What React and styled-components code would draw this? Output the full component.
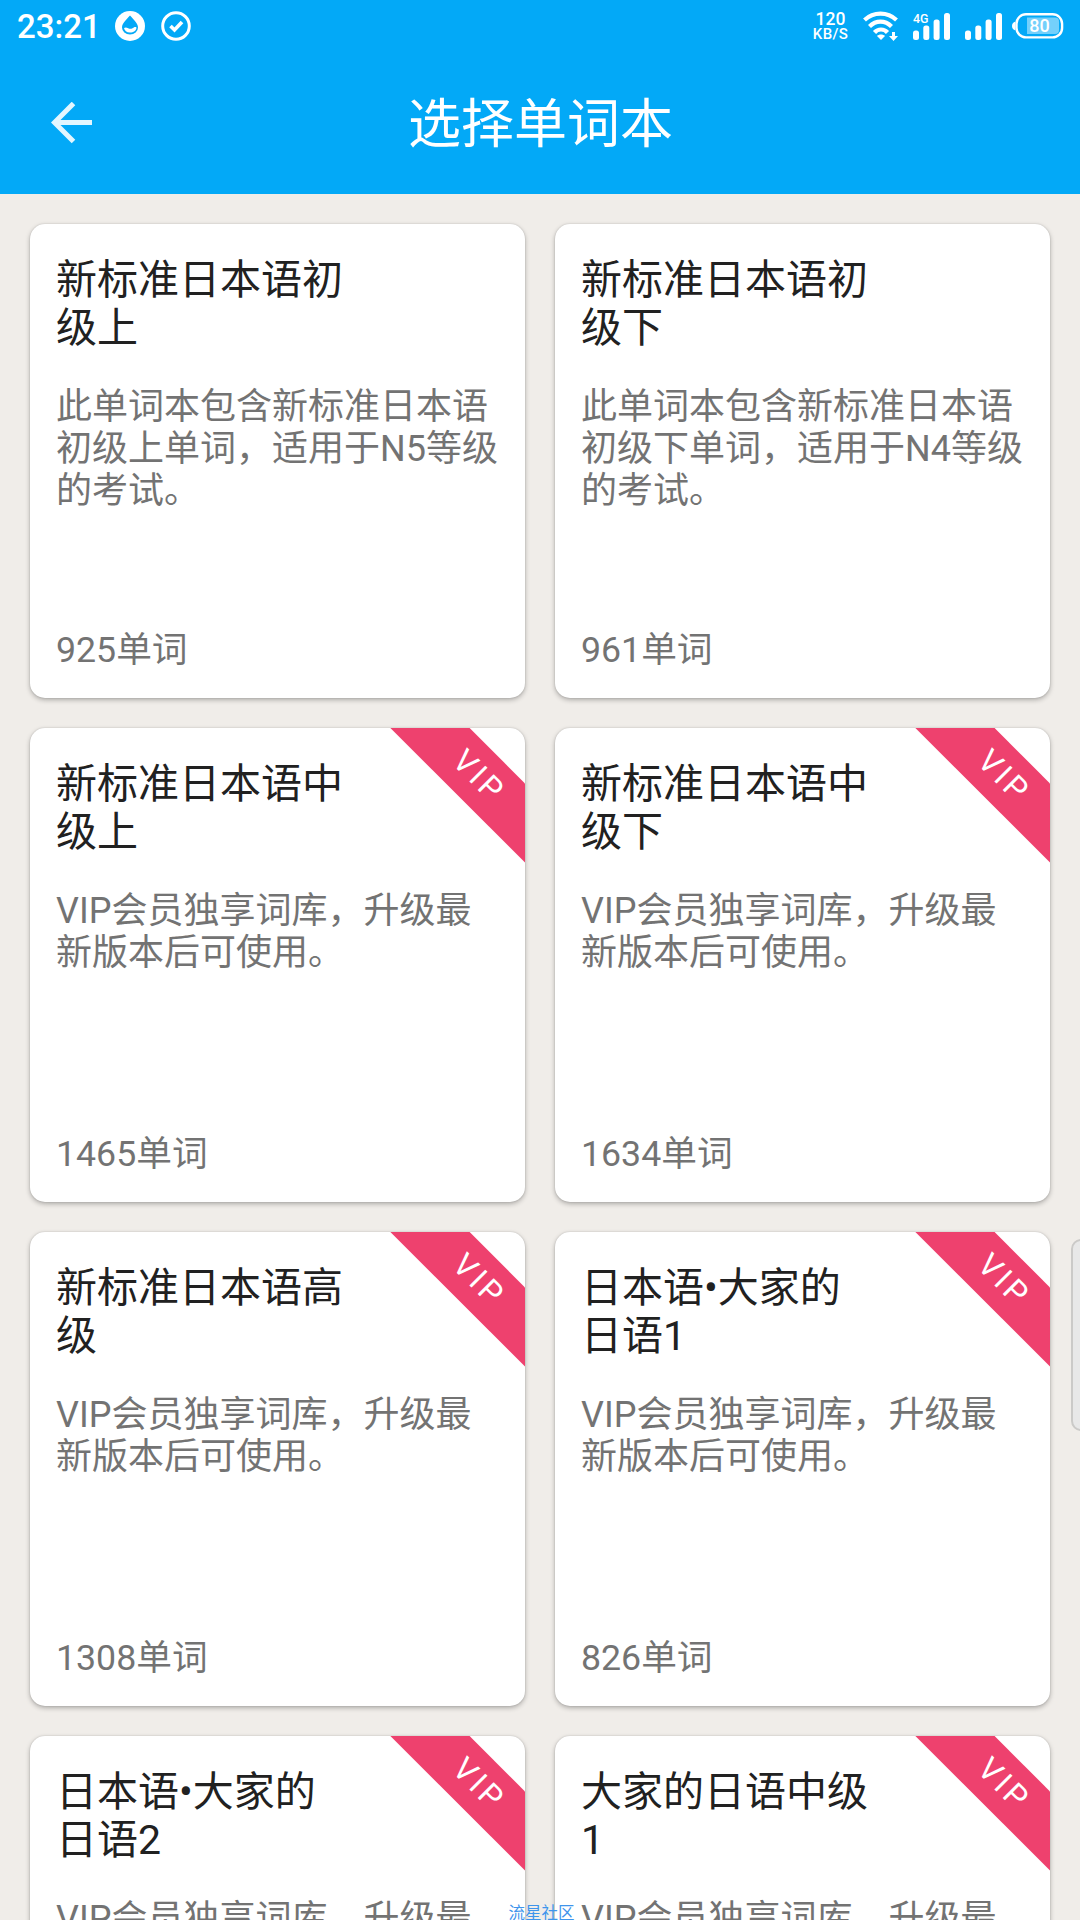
import React from 'react';
import styled, { createGlobalStyle } from 'styled-components';

const GlobalStyle = createGlobalStyle`
  * {
    box-sizing: border-box;
  }

  body {
    margin: 0;
    background: #f0ede9;
    font-family: Roboto, 'Noto Sans CJK SC', sans-serif;
  }
`;

const Screen = styled.div`
  position: relative;
  width: 1080px;
  height: 1920px;
  overflow: hidden;
  background: #f0ede9;
`;

const Header = styled.header`
  height: 194px;
  background: #03a9f7;
  color: #fff;
`;

const StatusBar = styled.div`
  display: flex;
  justify-content: space-between;
  height: 52px;
  padding: 0 16px 0 17px;
`;

const StatusGroup = styled.div`
  display: flex;
  align-items: center;
  height: 52px;
`;

const Clock = styled.span`
  width: 98px;
  padding-top: 1px;
  font-size: 33px;
  font-weight: 500;
  line-height: 52px;
`;

const StatusIcon = styled.svg`
  display: block;
  flex: none;
  margin-left: ${props => props.$gap || 0}px;
`;

const NetSpeed = styled.div`
  display: flex;
  flex-direction: column;
  align-items: center;
  width: 37px;
  margin-right: 1px;
  font-weight: 500;
`;

const SpeedValue = styled.span`
  font-size: 17.5px;
  line-height: 16px;
`;

const SpeedUnit = styled.span`
  font-size: 15px;
  line-height: 15px;
  letter-spacing: 0.4px;
`;

const AppBar = styled.div`
  display: grid;
  grid-template-columns: 144px 1fr 144px;
  align-items: center;
  height: 142px;
`;

const BackButton = styled.button`
  display: flex;
  justify-content: center;
  padding: 0;
  border: none;
  background: none;
`;

const Title = styled.h1`
  margin: 0;
  padding: 3px 0 0 1px;
  font-size: 53px;
  font-weight: 400;
  line-height: 64px;
  text-align: center;
`;

const BookGrid = styled.main`
  display: grid;
  grid-template-columns: 495px 495px;
  grid-auto-rows: 474px;
  gap: 30px;
  padding: 30px;
`;

const Card = styled.article`
  position: relative;
  display: flex;
  flex-direction: column;
  padding: 32px 22px 27px 26px;
  border-radius: 15px;
  overflow: hidden;
  background: #fff;
  box-shadow: 0 2px 5px rgba(0, 0, 0, 0.28), 0 0 2px rgba(0, 0, 0, 0.14);
`;

const BookName = styled.h2`
  width: 294px;
  height: 96px;
  margin: 0 0 34px;
  color: #212121;
  font-size: 41px;
  font-weight: 400;
  line-height: 48px;
`;

const Description = styled.p`
  flex: 1;
  margin: 0;
  color: #737373;
  font-size: 36px;
  line-height: 42px;
`;

const WordCount = styled.span`
  color: #737373;
  font-size: 35.7px;
  line-height: 42px;
`;

const Ribbon = styled.span`
  position: absolute;
  top: 20px;
  right: -53px;
  width: 200px;
  height: 56px;
  background: #ee416e;
  color: #fff;
  font-size: 31.5px;
  line-height: 56px;
  letter-spacing: 3.6px;
  text-indent: 2px;
  text-align: center;
  transform: rotate(45deg);
`;

const EdgeHandle = styled.div`
  position: absolute;
  top: 1239px;
  right: -12px;
  width: 21px;
  height: 192px;
  border: 2px solid #cbcac8;
  border-radius: 10px;
  background: #e8e8e8;
`;

const Watermark = styled.span`
  position: absolute;
  top: 1904px;
  left: 508.5px;
  color: #3f95ec;
  font-size: 16.5px;
  line-height: 20px;
`;

const BOOKS = [
  { name: '新标准日本语初级上', description: '此单词本包含新标准日本语初级上单词，适用于N5等级的考试。', words: 925 },
  { name: '新标准日本语初级下', description: '此单词本包含新标准日本语初级下单词，适用于N4等级的考试。', words: 961 },
  { name: '新标准日本语中级上', words: 1465, vip: true },
  { name: '新标准日本语中级下', words: 1634, vip: true },
  { name: '新标准日本语高级', words: 1308, vip: true },
  { name: '日本语•大家的日语1', words: 826, vip: true },
  { name: '日本语•大家的日语2', words: 870, vip: true },
  { name: '大家的日语中级1', words: 1012, vip: true },
];

const VIP_DESCRIPTION = 'VIP会员独享词库，升级最新版本后可使用。';

const DropIcon = () => (
  <StatusIcon width="30" height="30" viewBox="0 0 30 30">
    <circle cx="15" cy="15" r="15" fill="#fff" />
    <path d="M15 4.5C12 8 7 12 7 16.500a8 7 0 0 0 16 0C23 12 18 8 15 4.500Z" fill="#03a9f7" />
    <path d="M9 17c3-2 5 2 8 0.500c2-1 3-2 4.500-1c0 3-3 5-6.500 5s-5.500-2-6-4.500Z" fill="#fff" />
  </StatusIcon>
);

const CheckIcon = () => (
  <StatusIcon $gap={16} width="30" height="30" viewBox="0 0 30 30" fill="none" stroke="#fff">
    <circle cx="15" cy="15" r="13.300" strokeWidth="3" />
    <path d="m9.500 15 4 4 7.500-8" strokeWidth="3.600" />
  </StatusIcon>
);

const WifiIcon = () => (
  <StatusIcon $gap={13} width="36" height="30" viewBox="0 0 36 30" fill="none" stroke="#fff" strokeWidth="4.200">
    <path d="M1.500 9c9-8.500 23-8.500 32 0M6.500 15.500c6.500-6.500 15.500-6.500 22 0M11.500 21.500c3.500-4 9.500-4 13 0" />
    <path d="m14 25 4 4 4-4c-2-2-6-2-8 0Z" fill="#fff" stroke="none" />
    <path d="M29 21h3v4h3l-4.500 5-4.500-5h3Z" fill="#fff" stroke="none" />
  </StatusIcon>
);

const SignalIcon = ({ label, gap }) => (
  <StatusIcon $gap={gap} width="37" height="30" viewBox="0 0 37 30" fill="#fff">
    <rect x="0" y="19.500" width="6" height="9.500" rx="2.500" />
    <rect x="10.300" y="14.500" width="6" height="14.500" rx="2.500" />
    <rect x="20.600" y="8.500" width="6" height="20.500" rx="2.500" />
    <rect x="31" y="2" width="6" height="27" rx="2.500" />
    {label && (
      <text x="0" y="11.500" fontSize="13.500" fontWeight="500" textLength="15.500" lengthAdjust="spacingAndGlyphs">
        {label}
      </text>
    )}
  </StatusIcon>
);

const BatteryIcon = ({ level }) => (
  <StatusIcon $gap={10} width="52" height="26" viewBox="0 0 52 26">
    <path d="M3.500 8.500v9C1 17 0 15 0 13s1-4 3.500-4.500Z" fill="#fff" />
    <rect x="4.500" y="1.200" width="45.600" height="23.200" rx="9.500" fill="none" stroke="#fff" strokeWidth="2.400" />
    <path d="M15 4.500h28a4 4 0 0 1 4 4v8.500a4 4 0 0 1-4 4h-28Z" fill="#fff" fillOpacity="0.450" />
    <text x="27.500" y="19" fontSize="18" fontWeight="500" fill="#fff" textAnchor="middle">{level}</text>
  </StatusIcon>
);

const BackIcon = () => (
  <svg width="42" height="42" viewBox="0 0 42 42" fill="none" stroke="#e3f6ff" strokeWidth="5">
    <path d="M41 20.500H5M22.500 1.500 3.500 20.500l19 19" />
  </svg>
);

const BookCard = ({ book }) => (
  <Card>
    <BookName>{book.name}</BookName>
    <Description>{book.description || VIP_DESCRIPTION}</Description>
    <WordCount>{book.words}单词</WordCount>
    {book.vip && <Ribbon>VIP</Ribbon>}
  </Card>
);

const App = () => (
  <Screen>
    <GlobalStyle />
    <Header>
      <StatusBar>
        <StatusGroup>
          <Clock>23:21</Clock>
          <DropIcon />
          <CheckIcon />
        </StatusGroup>
        <StatusGroup>
          <NetSpeed>
            <SpeedValue>120</SpeedValue>
            <SpeedUnit>KB/S</SpeedUnit>
          </NetSpeed>
          <WifiIcon />
          <SignalIcon label="4G" gap={14} />
          <SignalIcon gap={15} />
          <BatteryIcon level={80} />
        </StatusGroup>
      </StatusBar>
      <AppBar>
        <BackButton aria-label="返回">
          <BackIcon />
        </BackButton>
        <Title>选择单词本</Title>
      </AppBar>
    </Header>
    <BookGrid>
      {BOOKS.map(book => (
        <BookCard key={book.name} book={book} />
      ))}
    </BookGrid>
    <EdgeHandle />
    <Watermark>流星社区</Watermark>
  </Screen>
);

export default App;
